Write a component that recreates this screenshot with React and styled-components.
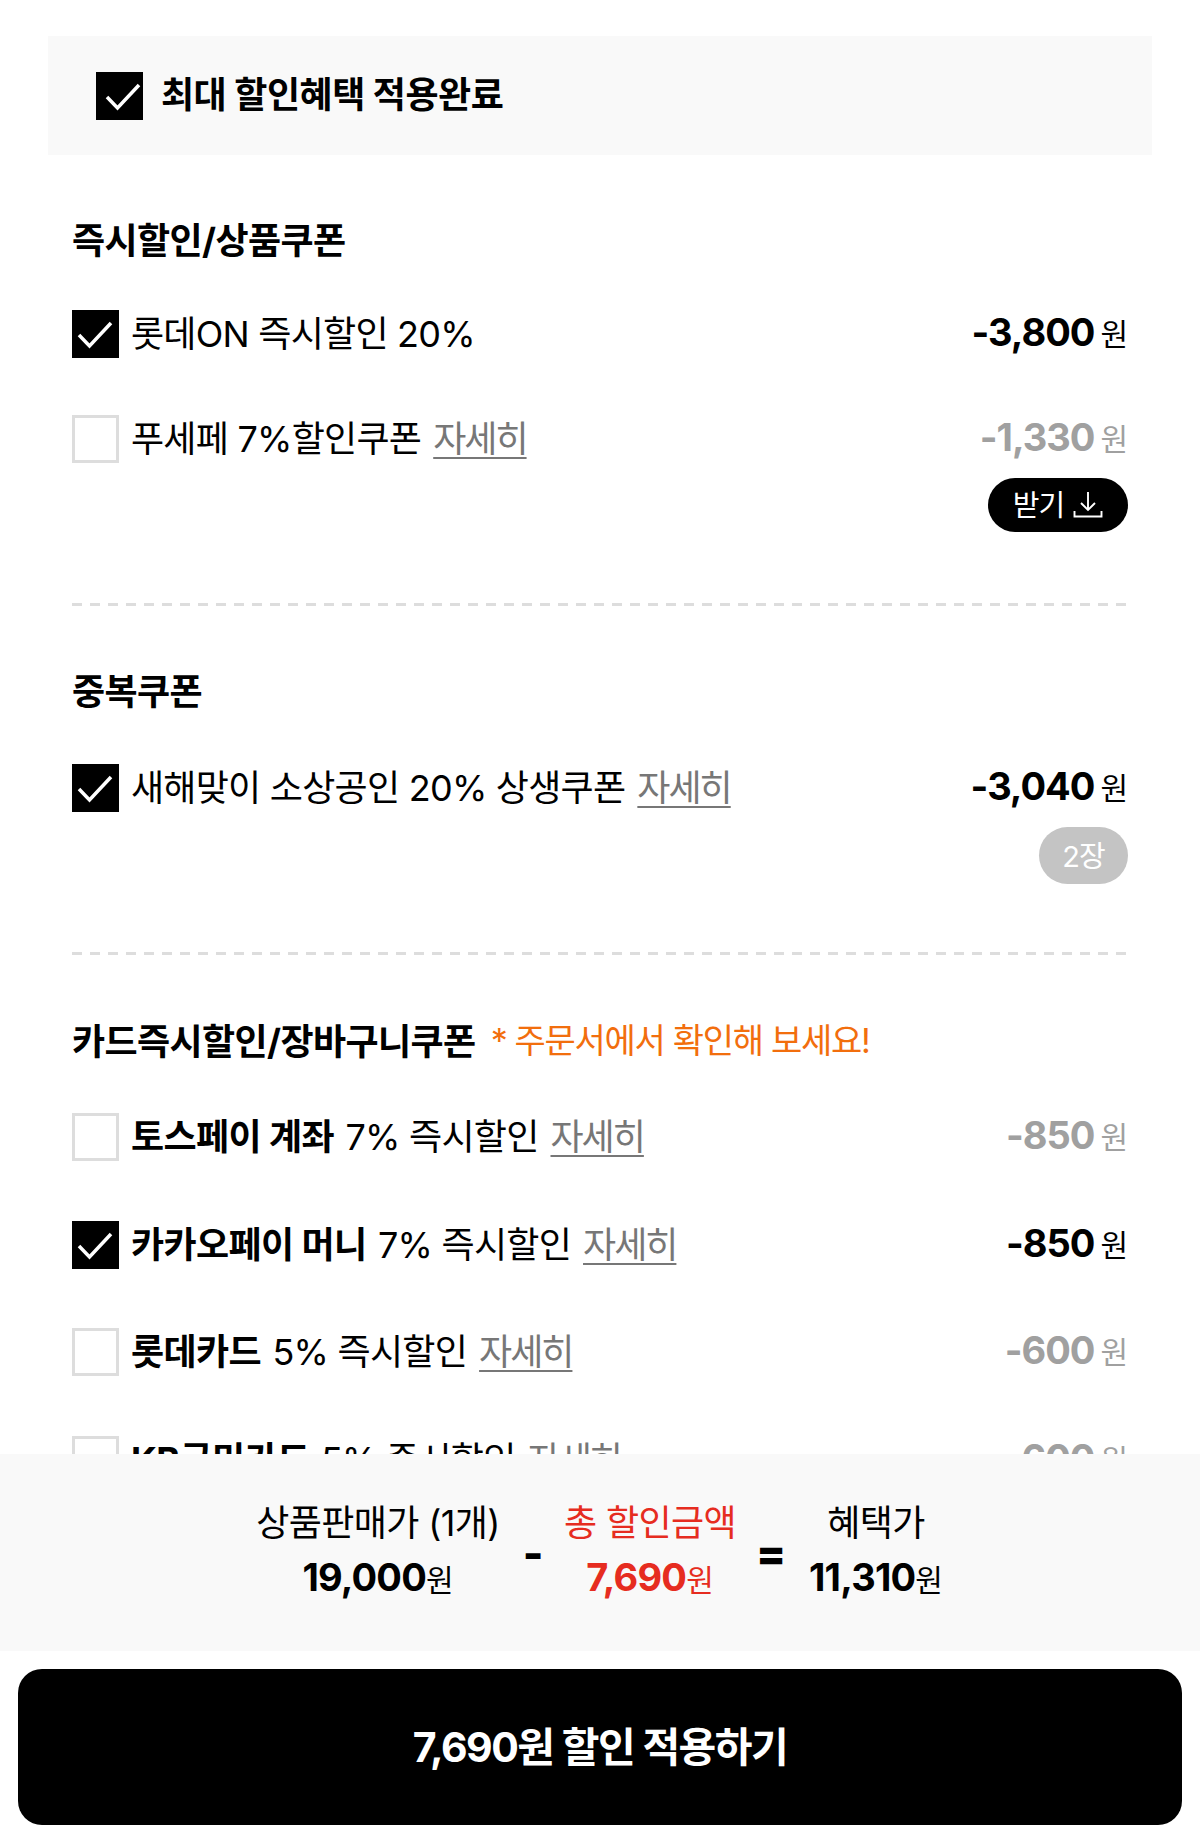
import styled, { createGlobalStyle } from 'styled-components';

const GlobalStyle = createGlobalStyle`
  * { box-sizing: border-box; }
  html, body { margin: 0; padding: 0; background: #fff; }
  body { font-family: Inter, "Noto Sans CJK KR", "Noto Sans", sans-serif; color: #000; }
`;

const Page = styled.div`
  width: 1200px;
  height: 1825px;
  display: flex;
  flex-direction: column;
  overflow: hidden;
`;

const Scroller = styled.div`
  height: 1454px;
  flex: none;
  overflow: hidden;
  padding: 36px 72px 0;
`;

const BestBox = styled.div`
  margin: 0 -24px;
  height: 119px;
  padding-left: 48px;
  display: flex;
  align-items: center;
  gap: 18px;
  background: #f9f9f9;
`;

const BestTitle = styled.span`
  padding-bottom: 7px;
  font-size: 36px;
  font-weight: 700;
  letter-spacing: -0.5px;
`;

const Section = styled.section`
  padding-top: ${(p) => p.$top}px;
  padding-bottom: ${(p) => p.$bottom || 0}px;
  border-bottom: ${(p) => (p.$dashed ? '3px' : '0')} dashed transparent;
  background-image: ${(p) =>
    p.$dashed ? 'repeating-linear-gradient(to right, #ddd 0 10px, transparent 10px 18px)' : 'none'};
  background-size: 100% 3px;
  background-position: bottom;
  background-repeat: no-repeat;
  background-origin: border-box;
  background-clip: border-box;
`;

const Heading = styled.h2`
  margin: 0;
  height: 48px;
  padding-bottom: 5px;
  display: flex;
  align-items: center;
  gap: 15px;
  font-size: 36px;
  font-weight: 700;
  letter-spacing: -0.6px;
`;

const Notice = styled.span`
  font-size: 34px;
  font-weight: 400;
  letter-spacing: -1.3px;
  color: #f26e0d;
`;

const Row = styled.div`
  margin-top: ${(p) => p.$top}px;
  display: flex;
  justify-content: space-between;
  align-items: flex-start;
`;

const Label = styled.div`
  display: flex;
  align-items: center;
  gap: 12px;
  min-width: 0;
`;

const Box = styled.span`
  width: 47px;
  height: 48px;
  flex: none;
  display: flex;
  background: ${(p) => (p.$on ? '#000' : '#fff')};
  border: ${(p) => (p.$on ? '0' : '3px solid #ddd')};
`;

const Text = styled.span`
  font-size: 36px;
  line-height: 48px;
  font-weight: 400;
  letter-spacing: -0.75px;
  white-space: nowrap;

  b {
    font-weight: 700;
    letter-spacing: -0.6px;
    margin-right: 2px;
  }
`;

const More = styled.span`
  margin-left: 12px;
  color: #777;
  letter-spacing: -2px;
  text-decoration: underline;
  text-underline-offset: 5px;
  text-decoration-thickness: 2px;
`;

const Side = styled.div`
  display: flex;
  flex-direction: column;
  align-items: flex-end;
`;

const Amount = styled.div`
  height: 48px;
  padding-bottom: 4px;
  display: flex;
  align-items: center;
  gap: 6px;
  color: ${(p) => (p.$off ? '#a0a0a0' : '#000')};
  font-size: 38px;
  font-weight: 700;
  letter-spacing: -1px;

  small {
    font-size: 30px;
    font-weight: 400;
    letter-spacing: 0;
  }
`;

const GetButton = styled.button`
  margin-top: 15px;
  width: 140px;
  height: 54px;
  border: 0;
  border-radius: 27px;
  background: #000;
  color: #fff;
  display: flex;
  align-items: center;
  justify-content: center;
  gap: 9px;
  font-family: inherit;
  font-size: 29px;
  font-weight: 400;
  letter-spacing: -1px;
  padding: 0 0 4px;

  svg {
    margin-top: 4px;
  }
`;

const CountBadge = styled.span`
  margin-top: 15px;
  width: 89px;
  height: 57px;
  padding-bottom: 3px;
  border-radius: 29px;
  background: #c4c4c4;
  color: #fff;
  display: flex;
  align-items: center;
  justify-content: center;
  font-size: 29px;
  letter-spacing: -1px;
`;

const Summary = styled.div`
  height: 197px;
  flex: none;
  background: #f9f9f9;
  display: flex;
  justify-content: center;
  align-items: flex-start;
  padding-top: 45px;
`;

const SumCol = styled.div`
  width: ${(p) => p.$w}px;
  display: flex;
  flex-direction: column;
  align-items: center;
  white-space: nowrap;
  color: ${(p) => p.$color || '#000'};
`;

const SumLabel = styled.div`
  font-size: 36px;
  line-height: 48px;
  letter-spacing: -0.6px;
`;

const SumValue = styled.div`
  margin-top: 6px;
  font-size: 38px;
  line-height: 48px;
  font-weight: 700;
  letter-spacing: -0.8px;

  small {
    font-size: 30px;
    font-weight: 400;
    letter-spacing: 0;
  }
`;

const Operator = styled.div`
  width: ${(p) => p.$w}px;
  text-align: center;
  font-size: 44px;
  line-height: 48px;
  font-weight: 800;
  padding-top: 30px;
`;

const ApplyWrap = styled.div`
  flex: 1;
  padding: 18px 18px 0;
`;

const ApplyButton = styled.button`
  width: 100%;
  height: 156px;
  padding: 0 0 6px;
  border: 0;
  border-radius: 24px;
  background: #000;
  color: #fff;
  font-family: inherit;
  font-size: 41px;
  font-weight: 700;
  letter-spacing: -1.5px;
`;

const Check = ({ on, dx = 0 }) => (
  <Box $on={on}>
    {on && (
      <svg width="47" height="48" viewBox="0 0 47 48" fill="none">
        <path
          d="M7 25 L17.5 36 L39 13"
          stroke="#fff"
          strokeWidth="3.5"
          transform={`translate(${dx} 0)`}
        />
      </svg>
    )}
  </Box>
);

const DownloadIcon = () => (
  <svg width="30" height="28" viewBox="0 0 30 28" fill="none" stroke="#fff" strokeWidth="1.9">
    <path d="M15 1 V19 M8 12 L15 19 L22 12" />
    <path d="M1.5 20 V25.5 H28.5 V20" />
  </svg>
);

const Won = ({ value, off }) => (
  <Amount $off={off}>
    {value}
    <small>원</small>
  </Amount>
);

const cardRows = [
  { id: 1, bold: '토스페이 계좌', text: '7% 즉시할인', amount: '-850', on: false, top: 48 },
  { id: 2, bold: '카카오페이 머니', text: '7% 즉시할인', amount: '-850', on: true, top: 60 },
  { id: 3, bold: '롯데카드', text: '5% 즉시할인', amount: '-600', on: false, top: 59 },
  { id: 4, bold: 'KB국민카드', text: '5% 즉시할인', amount: '-600', on: false, top: 60 },
];

export default function App() {
  return (
    <Page>
      <GlobalStyle />
      <Scroller>
        <BestBox>
          <Check on dx={4} />
          <BestTitle>최대 할인혜택 적용완료</BestTitle>
        </BestBox>

        <Section $top={61} $bottom={71} $dashed>
          <Heading>즉시할인/상품쿠폰</Heading>
          <Row $top={46}>
            <Label>
              <Check on />
              <Text>롯데ON 즉시할인 20%</Text>
            </Label>
            <Side>
              <Won value="-3,800" />
            </Side>
          </Row>
          <Row $top={57}>
            <Label>
              <Check />
              <Text>
                푸세페 7%할인쿠폰<More>자세히</More>
              </Text>
            </Label>
            <Side>
              <Won value="-1,330" off />
              <GetButton>
                받기
                <DownloadIcon />
              </GetButton>
            </Side>
          </Row>
        </Section>

        <Section $top={61} $bottom={68} $dashed>
          <Heading>중복쿠폰</Heading>
          <Row $top={49}>
            <Label>
              <Check on />
              <Text>
                새해맞이 소상공인 20% 상생쿠폰<More>자세히</More>
              </Text>
            </Label>
            <Side>
              <Won value="-3,040" />
              <CountBadge>2장</CountBadge>
            </Side>
          </Row>
        </Section>

        <Section $top={62}>
          <Heading>
            카드즉시할인/장바구니쿠폰
            <Notice>* 주문서에서 확인해 보세요!</Notice>
          </Heading>
          {cardRows.map((row) => (
            <Row key={row.id} $top={row.top}>
              <Label>
                <Check on={row.on} />
                <Text>
                  <b>{row.bold}</b> {row.text}
                  <More>자세히</More>
                </Text>
              </Label>
              <Side>
                <Won value={row.amount} off={!row.on} />
              </Side>
            </Row>
          ))}
        </Section>
      </Scroller>

      <Summary>
        <SumCol $w={270}>
          <SumLabel>상품판매가 (1개)</SumLabel>
          <SumValue>
            19,000<small>원</small>
          </SumValue>
        </SumCol>
        <Operator $w={40}>-</Operator>
        <SumCol $w={194} $color="#e62c20">
          <SumLabel>총 할인금액</SumLabel>
          <SumValue>
            7,690<small>원</small>
          </SumValue>
        </SumCol>
        <Operator $w={48}>=</Operator>
        <SumCol $w={162}>
          <SumLabel>혜택가</SumLabel>
          <SumValue>
            11,310<small>원</small>
          </SumValue>
        </SumCol>
      </Summary>

      <ApplyWrap>
        <ApplyButton>7,690원 할인 적용하기</ApplyButton>
      </ApplyWrap>
    </Page>
  );
}
